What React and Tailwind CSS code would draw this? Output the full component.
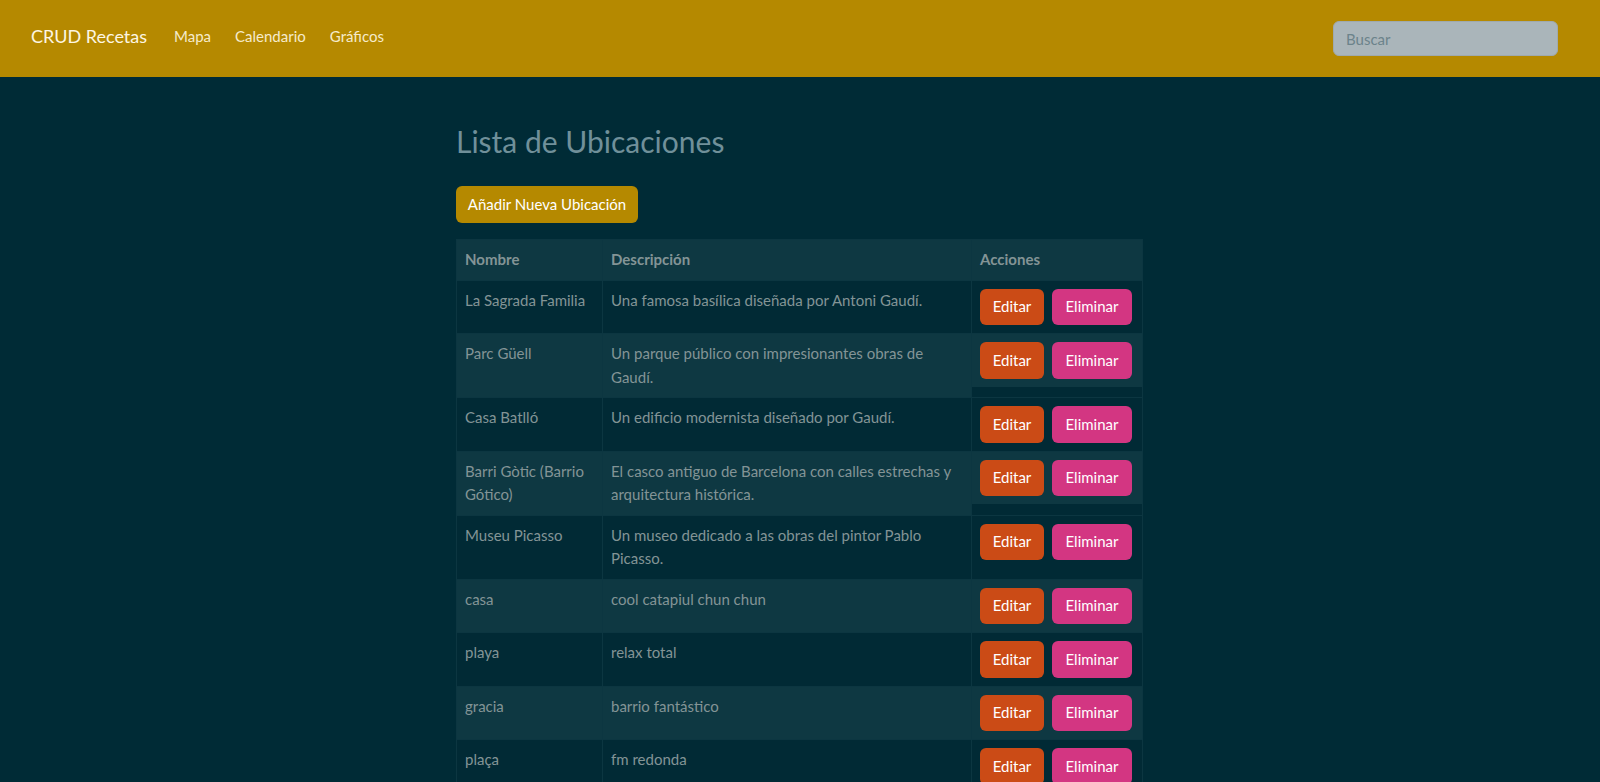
import React from "react";

const ubicaciones = [
  { nombre: ["La Sagrada Familia"], descripcion: ["Una famosa basílica diseñada por Antoni Gaudí."] },
  { nombre: ["Parc Güell"], descripcion: ["Un parque público con impresionantes obras de", "Gaudí."] },
  { nombre: ["Casa Batlló"], descripcion: ["Un edificio modernista diseñado por Gaudí."] },
  { nombre: ["Barri Gòtic (Barrio", "Gótico)"], descripcion: ["El casco antiguo de Barcelona con calles estrechas y", "arquitectura histórica."] },
  { nombre: ["Museu Picasso"], descripcion: ["Un museo dedicado a las obras del pintor Pablo", "Picasso."] },
  { nombre: ["casa"], descripcion: ["cool catapiul chun chun"] },
  { nombre: ["playa"], descripcion: ["relax total"] },
  { nombre: ["gracia"], descripcion: ["barrio fantástico"] },
  { nombre: ["plaça"], descripcion: ["fm redonda"] }
];

function Lines({ lines }) {
  return lines.map((line, i) => (
    <React.Fragment key={i}>
      {i > 0 && <br />}
      {line}
    </React.Fragment>
  ));
}

function Navbar() {
  return (
    <nav className="h-[77px] bg-[#b58900] flex items-center pl-[31px] pr-[42px]">
      <a className="text-[18px] text-[#fdf6e3] mr-[27px] mb-[4px]">CRUD Recetas</a>
      <ul className="flex items-center gap-[24px] text-[15px] text-[#f5ebcb] mb-[4px]">
        <li>Mapa</li>
        <li>Calendario</li>
        <li>Gráficos</li>
      </ul>
      <div className="flex-grow" />
      <input
        type="text"
        placeholder="Buscar"
        className="w-[225px] h-[35px] rounded-[6px] border border-[#9fa9ad] bg-[#aab5ba] px-3 text-[15px] placeholder:text-[#6c838b] focus:outline-none"
      />
    </nav>
  );
}

export default function App() {
  return (
    <div className="min-h-screen bg-[#002b36] font-['Lato',sans-serif] text-[#839496]">
      <Navbar />
      <main className="w-[688px] mx-auto pr-[2px] pt-[46px] pb-12">
        <h2 className="text-[30px] leading-[36px] text-[#70909a]">Lista de Ubicaciones</h2>
        <button className="mt-[27px] w-[182px] h-[37px] rounded-[6px] bg-[#b58900] text-[15px] text-white">
          Añadir Nueva Ubicación
        </button>
        <table className="mt-[16px] w-full table-fixed border-collapse text-[15px] leading-[23.5px]">
          <colgroup>
            <col className="w-[146px]" />
            <col className="w-[369px]" />
            <col className="w-[171px]" />
          </colgroup>
          <thead>
            <tr className="bg-[#0e3842] text-left">
              <th className="px-2 py-2 font-bold border border-[#0c3641]">Nombre</th>
              <th className="px-2 py-2 font-bold border border-[#0c3641]">Descripción</th>
              <th className="px-2 py-2 font-bold border border-[#0c3641]">Acciones</th>
            </tr>
          </thead>
          <tbody>
            {ubicaciones.map((u, i) => {
              const rowBg = i % 2 === 1 ? "bg-[#0e3842]" : "bg-[#012a35]";
              return (
                <tr key={i} className="align-top">
                  <td className={`px-2 py-2 border border-[#0c3641] ${rowBg}`}>
                    <Lines lines={u.nombre} />
                  </td>
                  <td className={`px-2 py-2 border border-[#0c3641] ${rowBg}`}>
                    <Lines lines={u.descripcion} />
                  </td>
                  <td className="p-0 border border-[#0c3641] bg-[#012a35]">
                    <div className={`flex gap-2 pl-[8px] py-2 ${rowBg}`}>
                      <button className="w-[64px] h-[36.5px] rounded-[6px] bg-[#cb4b16] text-white">Editar</button>
                      <button className="w-[80px] h-[36.5px] rounded-[6px] bg-[#d33682] text-white">Eliminar</button>
                    </div>
                  </td>
                </tr>
              );
            })}
          </tbody>
        </table>
      </main>
    </div>
  );
}
